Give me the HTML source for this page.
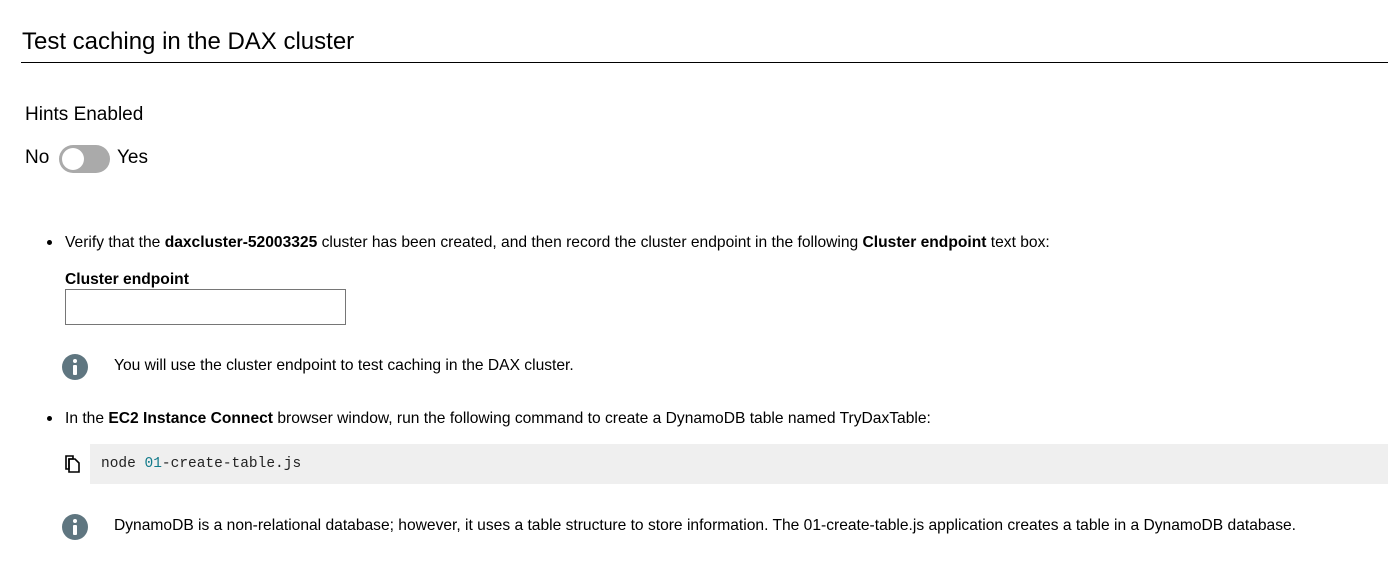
<!DOCTYPE html>
<html><head><meta charset="utf-8"><style>
body{margin:0;width:1388px;height:566px;background:#fff;font-family:"Liberation Sans",sans-serif;color:#000;position:relative;overflow:hidden}
.a{position:absolute;white-space:nowrap}
.t{font-size:15.6px}
.dot{position:absolute;width:5px;height:5px;border-radius:50%;background:#000}
.info{position:absolute;width:26px;height:26px;border-radius:50%;background:#5f7680}
.info:before{content:"";position:absolute;left:11px;top:5px;width:4px;height:4px;border-radius:50%;background:#fff}
.info:after{content:"";position:absolute;left:11px;top:11px;width:4px;height:10px;background:#fff;border-radius:1px}
</style></head><body>
<div class="a" style="left:22px;top:28px;font-size:24px">Test caching in the DAX cluster</div>
<div class="a" style="left:21px;top:62px;width:1367px;height:1px;background:#000"></div>
<div class="a" style="left:25px;top:104px;font-size:19px">Hints Enabled</div>
<div class="a" style="left:25px;top:147px;font-size:19px">No</div>
<div class="a" style="left:59px;top:145px;width:51px;height:28px;border-radius:14px;background:#aaa"></div>
<div class="a" style="left:62px;top:148px;width:22px;height:22px;border-radius:50%;background:#fff"></div>
<div class="a" style="left:117px;top:147px;font-size:19px">Yes</div>
<div class="dot" style="left:47px;top:240px"></div>
<div class="a t" style="left:65px;top:234px">Verify that the <b>daxcluster-52003325</b> cluster has been created, and then record the cluster endpoint in the following <b>Cluster endpoint</b> text box:</div>
<div class="a t" style="left:65px;top:271px;font-weight:bold">Cluster endpoint</div>
<div class="a" style="left:65px;top:289px;width:279px;height:34px;border:1px solid #767676"></div>
<div class="info" style="left:62px;top:354px"></div>
<div class="a t" style="left:114px;top:357px">You will use the cluster endpoint to test caching in the DAX cluster.</div>
<div class="dot" style="left:47px;top:416px"></div>
<div class="a t" style="left:65px;top:410px">In the <b>EC2 Instance Connect</b> browser window, run the following command to create a DynamoDB table named TryDaxTable:</div>
<svg class="a" style="left:65px;top:455px" width="16" height="18" viewBox="0 0 16 18"><path d="M1 1h7v3H4v10H1z" fill="none" stroke="#000" stroke-width="1.6"/><path d="M4 4h6l4 4v9H4z" fill="none" stroke="#000" stroke-width="1.6"/></svg>
<div class="a" style="left:90px;top:444px;width:1298px;height:40px;background:#efefef"></div>
<div class="a" style="left:101px;top:456px;font-family:'Liberation Mono',monospace;font-size:14.5px;color:#222">node <span style="color:#127a8a">01</span>-create-table.js</div>
<div class="info" style="left:62px;top:514px"></div>
<div class="a t" style="left:114px;top:517px">DynamoDB is a non-relational database; however, it uses a table structure to store information. The 01-create-table.js application creates a table in a DynamoDB database.</div>
</body></html>
